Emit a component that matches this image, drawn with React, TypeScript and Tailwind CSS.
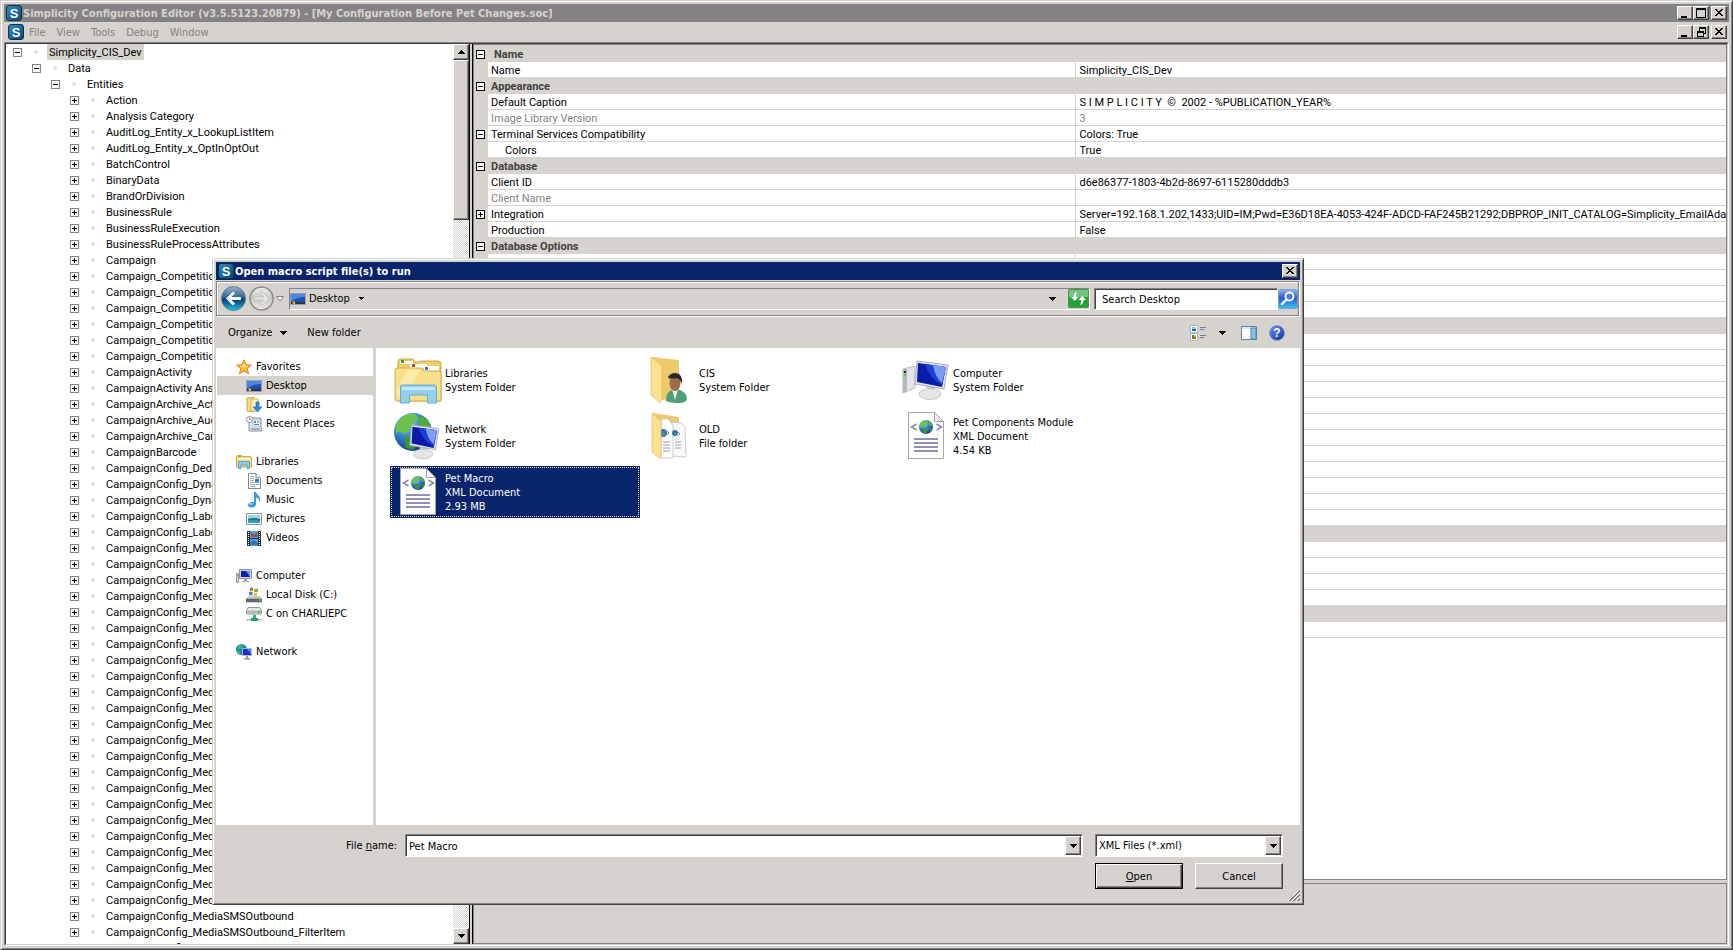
import { useId, useState } from "react";
import type { ReactNode } from "react";
import { clsx } from "clsx";

const RAISED =
  "border border-t-white border-l-white border-r-[#424142] border-b-[#424142] bg-[#d6d3ce] shadow-[inset_-1px_-1px_#848284]";
const SUNKEN =
  "border border-t-[#848284] border-l-[#848284] border-r-white border-b-white bg-white shadow-[inset_1px_1px_#424142]";
const UI_FONT = "font-['DejaVu_Sans_Condensed','DejaVu_Sans',sans-serif]";
const GRID_FONT = "font-['Roboto','Liberation_Sans',sans-serif]";

type TreeNode = { label: string; level: number; open?: boolean };

const entities = [
  "Action",
  "Analysis Category",
  "AuditLog_Entity_x_LookupListItem",
  "AuditLog_Entity_x_OptInOptOut",
  "BatchControl",
  "BinaryData",
  "BrandOrDivision",
  "BusinessRule",
  "BusinessRuleExecution",
  "BusinessRuleProcessAttributes",
  "Campaign",
  ...Array<string>(6).fill("Campaign_Competition"),
  "CampaignActivity",
  "CampaignActivity Answer",
  "CampaignArchive_Activity",
  "CampaignArchive_Audit",
  "CampaignArchive_Campaign",
  "CampaignBarcode",
  "CampaignConfig_Dedupe",
  "CampaignConfig_Dynamic",
  "CampaignConfig_Dynamic",
  "CampaignConfig_Label",
  "CampaignConfig_Label",
  ...Array<string>(22).fill("CampaignConfig_Media"),
  "CampaignConfig_MediaSMSInbound_Item",
  "CampaignConfig_MediaSMSOutbound",
  "CampaignConfig_MediaSMSOutbound_FilterItem",
  "CampaignConfig_ProductModel",
];

const tree: TreeNode[] = [
  { label: "Simplicity_CIS_Dev", level: 0, open: true },
  { label: "Data", level: 1, open: true },
  { label: "Entities", level: 2, open: true },
  ...entities.map((label) => ({ label, level: 3 })),
];

const INDENT = ["pl-[7px]", "pl-[26px]", "pl-[45px]", "pl-[64px]"];

type Property = {
  name?: string;
  value?: string;
  header?: boolean;
  toggle?: "plus" | "minus";
  muted?: boolean;
  nested?: boolean;
};

const blank = (count: number): Property[] => Array.from({ length: count }, () => ({}));

const properties: Property[] = [
  { name: "Name", header: true },
  { name: "Name", value: "Simplicity_CIS_Dev" },
  { name: "Appearance", header: true },
  { name: "Default Caption", value: "S I M P L I C I T Y  ©  2002 - %PUBLICATION_YEAR%" },
  { name: "Image Library Version", value: "3", muted: true },
  { name: "Terminal Services Compatibility", value: "Colors: True", toggle: "minus" },
  { name: "Colors", value: "True", nested: true },
  { name: "Database", header: true },
  { name: "Client ID", value: "d6e86377-1803-4b2d-8697-6115280dddb3" },
  { name: "Client Name", muted: true },
  {
    name: "Integration",
    value:
      "Server=192.168.1.202,1433;UID=IM;Pwd=E36D18EA-4053-424F-ADCD-FAF245B21292;DBPROP_INIT_CATALOG=Simplicity_EmailAdapter",
    toggle: "plus",
  },
  { name: "Production", value: "False" },
  { name: "Database Options", header: true },
  { name: "Auto Create", value: "False" },
  ...blank(3),
  { header: true },
  ...blank(12),
  { header: true },
  ...blank(4),
  { header: true },
  ...blank(1),
];

/* ---------- icons ---------- */

function AppIcon() {
  return (
    <span className="flex h-4 w-4 shrink-0 items-center justify-center rounded-[3px] border border-[#1c2c38] bg-linear-to-br from-[#2f8cc0] to-[#014a80] font-['Liberation_Sans',sans-serif] text-[13px] leading-none font-bold text-white">
      S
    </span>
  );
}

function Triangle({ className }: { className?: string }) {
  return (
    <svg width="7" height="4" viewBox="0 0 7 4" className={clsx("shrink-0", className)} shapeRendering="crispEdges">
      <path d="M0 0h7v1H6v1H5v1H4v1H3V3H2V2H1V1H0z" fill="#000" />
    </svg>
  );
}

function ToggleBox({ kind, stroke }: { kind: "plus" | "minus"; stroke: string }) {
  return (
    <svg width="9" height="9" viewBox="0 0 9 9" shapeRendering="crispEdges">
      <path d="M0 0h9v9H0z" fill={stroke} />
      <path d="M1 1h7v7H1z" fill="#fff" />
      <path d={kind === "plus" ? "M2 4h5v1H2zM4 2h1v5H4z" : "M2 4h5v1H2z"} fill="#000" />
    </svg>
  );
}

function Svg({ size = 16, children }: { size?: number; children: ReactNode }) {
  return (
    <svg width={size} height={size} viewBox={`0 0 ${size} ${size}`} className="shrink-0">
      {children}
    </svg>
  );
}

function StarIcon() {
  return (
    <Svg>
      <path
        d="M8 .8l2 4.9 5.3.4-4 3.5 1.3 5.3L8 12l-4.6 2.9 1.3-5.3-4-3.5 5.3-.4z"
        fill="#fdb834"
        stroke="#e2822a"
      />
      <path d="M8 3l1.200 3.400L12.500 7 8 8.500 4 7l3-.5z" fill="#ffe68c" />
    </Svg>
  );
}

function DesktopIcon() {
  return (
    <Svg>
      <path d="M0 2h16v12H0z" fill="#8fa3bd" />
      <path d="M1 3h14v8H1z" fill="#1c50b8" />
      <path d="M1 3h14v3Q8 6 1 10z" fill="#4f86e0" />
      <path d="M1 11h14v2H1z" fill="#30343c" />
      <path d="M2 10h2v2H2z" fill="#e8702a" />
      <path d="M4 10h1v2H4z" fill="#7ac943" />
      <path d="M3 12h2v1H3z" fill="#ffd23c" />
    </Svg>
  );
}

function DownloadsIcon() {
  return (
    <Svg>
      <path d="M1 1l7-.5V15L1 14z" fill="#f4dc8a" stroke="#c9a443" />
      <path d="M5 2h7v12H5z" fill="#fbeeb5" stroke="#d3b25a" />
      <path d="M10 5h3v5h3l-4.500 5L7 10h3z" fill="#2d8fdc" stroke="#1767ae" strokeWidth=".6" />
    </Svg>
  );
}

function RecentIcon() {
  return (
    <Svg>
      <path d="M4 2h11v9l1 4H3V2z" fill="#dfe3e8" stroke="#8e949c" />
      <path d="M7 4h7v6H7z" fill="#fff" stroke="#9aa6b5" strokeWidth=".6" />
      <path d="M8 5h2v2H8zM8 8h5v1H8z" fill="#3d8fd0" />
      <path d="M11 5h2v2h-2z" fill="#7fb7e6" />
      <path d="M5 12h9v2H5z" fill="#aab0b8" />
      <circle cx="3.500" cy="3.500" r="3" fill="#fafafa" stroke="#8e949c" />
      <path d="M3.500 1.500v2H5" stroke="#555" fill="none" strokeWidth=".7" />
    </Svg>
  );
}

function LibrariesIcon() {
  return (
    <Svg>
      <path d="M.5 2.500q0-1 1-1h4l1 1h8q1 0 1 1V13H.5z" fill="#f4dd85" stroke="#c8a849" />
      <path d="M2 2.500h3" stroke="#5aa84e" />
      <path d="M2 4h12v1.500H2z" fill="#fff8dc" />
      <path d="M2.500 14.500V8q0-.5.500-.5h10q.5 0 .5.500v6.500H11V11H5v3.500z" fill="#8ccbee" stroke="#4a9bcb" strokeWidth=".8" />
    </Svg>
  );
}

function DocumentsIcon() {
  return (
    <Svg>
      <path d="M2.500.5H10L14.500 5v10.500h-12z" fill="#fff" stroke="#7f8790" />
      <path d="M10 .5V5h4.500" fill="#e4e8ec" stroke="#7f8790" />
      <path d="M4 3.500h4M4 5.500h4M4 7.500h4M4 9.500h9M4 11.500h9M4 13.500h6" stroke="#9fb2c8" />
      <path d="M9 6h4v3H9z" fill="#2f7fd0" />
    </Svg>
  );
}

function MusicIcon() {
  return (
    <Svg>
      <path d="M8 0h2c.5 3 4 3 4 7 0 1-.5 2-1 2.500.2-2.500-1-3.500-3-4V12c0 2-2 3.500-4.500 3.500S2 14.500 2 13s2-3 4-3c.8 0 1.500.1 2 .4z" fill="#2f9be4" />
      <ellipse cx="5" cy="12" rx="2" ry="1" fill="#8fd0f7" />
    </Svg>
  );
}

function PicturesIcon() {
  return (
    <Svg>
      <path d="M.5 2.500h15v11H.5z" fill="#fff" stroke="#8c9196" />
      <path d="M2 4h12v4H2z" fill="#9ad4f2" />
      <path d="M2 8q4-2 12 0v4H2z" fill="#217a6c" />
      <path d="M2 9.500q6-1 12 .5v2H2z" fill="#2da0c8" />
    </Svg>
  );
}

function VideosIcon() {
  return (
    <Svg>
      <path d="M1 1h14v15H1z" fill="#2b2f36" />
      <path d="M4 1h8v7H4z" fill="#4da3dd" />
      <path d="M4 9h8v7H4z" fill="#4da3dd" />
      <path d="M5 2l3 3 3-3v5H5z" fill="#a34a3f" />
      <path d="M4 12l4-2 4 3v2H4z" fill="#2b74c4" />
      <path d="M2.500 2v13M13.500 2v13" stroke="#fff" strokeDasharray="1 1" />
    </Svg>
  );
}

function SmallComputerIcon() {
  return (
    <Svg>
      <path d="M.5 5.500h2v9h-2z" fill="#d5d7da" stroke="#999" />
      <path d="M1 7h1v1H1z" fill="#2fc42f" />
      <path d="M3.500 1.500h12v9h-12z" fill="#d2d4d8" stroke="#8f9296" />
      <path d="M5 3h9v6H5z" fill="#0b23b5" />
      <path d="M10 3h4v6z" fill="#6f93f5" />
      <path d="M8 11h3v2h2v1H6v-1h2z" fill="#a3a6aa" />
    </Svg>
  );
}

function DiskIcon() {
  return (
    <Svg>
      <path d="M2 9h12l2 3H0z" fill="#c6cbd0" />
      <path d="M0 12h16v3H0z" fill="#5d6972" stroke="#485058" strokeWidth=".5" />
      <path d="M13 12h2v2h-2z" fill="#45d845" />
      <path d="M4 1q2-1 3 0v3q-1-1-3 0z" fill="#e8562a" />
      <path d="M8 1.500q2 1 4 0v3q-2 1-4 0z" fill="#7ab83c" />
      <path d="M3 5q2-1 3.500 0v3.500q-2-1-3.500 0z" fill="#3b85d8" />
      <path d="M7.500 5.500q2 1 3.500 0v3q-2 1-3.500 0z" fill="#f5c32c" />
    </Svg>
  );
}

function NetDriveIcon() {
  return (
    <Svg>
      <path d="M2.500 1.500h11l2 2.500v3q0 1-1 1h-13q-1 0-1-1V4z" fill="#e4e6e8" stroke="#8f9498" />
      <path d="M1 4.500h14V7q0 .5-.5.500h-13Q1 7.500 1 7z" fill="#b4b8bd" />
      <path d="M12 5h2v2h-2z" fill="#30d030" />
      <path d="M7 9h3v4H7z" fill="#2ab07f" />
      <path d="M0 13h16v1.500H0z" fill="#a9b7b3" />
      <path d="M5 12h7v3H5z" fill="#1fa06e" />
    </Svg>
  );
}

function SmallNetworkIcon() {
  return (
    <Svg>
      <circle cx="5.500" cy="5.500" r="5.500" fill="#1d7fd6" />
      <path d="M2 2q3-2 5 0L5 5 2 6zM1 7l3 1v3Q1 10 1 7z" fill="#3bc93b" />
      <path d="M6.500 4.500h9v7h-9z" fill="#1630c0" stroke="#aab4cc" />
      <path d="M11 5h4v5z" fill="#5a80ee" />
      <path d="M10 12h2v2h2v1.500H8V14h2z" fill="#8e95a2" />
    </Svg>
  );
}

function LargeLibraries() {
  return (
    <Svg size={48}>
      <path d="M4 6q0-3 3-3h11q2 0 3 3h3q1-1 3-1h17q3 0 3 3v37H4z" fill="#efcd68" stroke="#cfa63f" />
      <path d="M6 5h13v3H6z" fill="#fff" />
      <path d="M7 4h3v3H7z" fill="#3f9e3f" />
      <path d="M16 8h17v4H16z" fill="#fff" />
      <path d="M18 8h3v3h-3z" fill="#dc3d22" />
      <path d="M30 10h15v5H30z" fill="#fff" />
      <path d="M31 11h3v3h-3z" fill="#2c7fcb" />
      <path d="M1 14q0-2 2-2h24l3 3h15q2 0 2 2v26q0 2-2 2H3q-2 0-2-2z" fill="#f8e08a" stroke="#d3ad4b" />
      <path d="M2 38L13 14h14L7 44z" fill="#fdf2c0" opacity=".6" />
      <path d="M6.500 47V31q0-2 2-2h31q3 0 3 2v16h-9v-8h-18v8z" fill="#94d0ee" stroke="#5baed6" />
      <path d="M8 31h33v3H8z" fill="#c5e8f8" />
    </Svg>
  );
}

function LargeUserFolder() {
  return (
    <Svg size={48}>
      <path d="M4 1l27 3v38l-17 2z" fill="#ecca6c" />
      <path d="M3 1l11 9v32l-2 5L3 39z" fill="#fae28f" stroke="#e2c062" strokeWidth=".7" />
      <path d="M18 45q0-9 6-11h8q7 3 7 9-1 4-8 4-8 0-13-2z" fill="#4f9d79" />
      <path d="M24 33h6l-3 11z" fill="#f0f5f2" />
      <ellipse cx="27" cy="27" rx="5.500" ry="8" fill="#9c6e4c" />
      <path d="M20 22q1-5 8-5 7 1 6 11-2-5-5-6-5 1-9 0z" fill="#2b2621" />
    </Svg>
  );
}

function Monitor({ x, y }: { x: number; y: number }) {
  return (
    <g transform={`translate(${x} ${y})`}>
      <path d="M12 24l9 2-1 6h-7z" fill="#c9cccf" />
      <ellipse cx="16" cy="33" rx="11" ry="5.500" fill="#e3e5e7" stroke="#b5b8bb" strokeWidth=".7" />
      <path d="M3 0l31 4-4 24-29-5z" fill="#dfe3ea" stroke="#a9adb4" />
      <path d="M4 2l28 4-4 20-25-5z" fill="#0a1ba8" />
      <path d="M11 3l21 3-4 18q-12-5-17-21z" fill="#1e3fd2" />
      <path d="M19 4l13 2-4 16q-7-6-9-18z" fill="#7f9df3" />
    </g>
  );
}

function LargeComputer() {
  return (
    <Svg size={48}>
      <path d="M1 13l12-3v22L1 37z" fill="#e2e4e7" stroke="#9fa2a6" strokeWidth=".7" />
      <path d="M1 13h4v23H1z" fill="#b3b6ba" />
      <path d="M2 15h2v2H2z" fill="#222" />
      <path d="M2 18h2v2H2z" fill="#3fdd33" />
      <Monitor x={12} y={5} />
    </Svg>
  );
}

function Globe({ cx, cy, r }: { cx: number; cy: number; r: number }) {
  const id = useId();
  return (
    <g transform={`translate(${cx} ${cy}) scale(${r / 20})`}>
      <radialGradient id={id} cx=".35" cy=".25" r=".8">
        <stop offset="0" stopColor="#9fd6f7" />
        <stop offset=".5" stopColor="#2d7fd0" />
        <stop offset="1" stopColor="#123c85" />
      </radialGradient>
      <circle r="20" fill={`url(#${id})`} />
      <path d="M-16-11Q-8-21 2-19L6-14-1-8-3-2-10 2-14-1-18 2Q-19-6-16-11z" fill="#6ec14b" />
      <path d="M8-17Q16-14 19-5L13-2 8-7 5-12z" fill="#53ab3c" />
      <path d="M-9 5L0 4 6 9 1 18Q-5 19-8 16z" fill="#3e9434" />
      <path d="M11 4l6-1Q16 12 11 15z" fill="#3e9434" />
    </g>
  );
}

function LargeNetwork() {
  return (
    <Svg size={48}>
      <Globe cx={19} cy={20} r={19} />
      <g transform="translate(15 13) scale(.88)">
        <Monitor x={0} y={0} />
      </g>
    </Svg>
  );
}

function LargeFolder() {
  return (
    <Svg size={48}>
      <path d="M5 1l26 4v36l-17 3z" fill="#ecca6c" />
      <path d="M24 10l9 1 4 4 1 30-14-1z" fill="#fafafa" stroke="#c9cbce" />
      <path d="M13 7h7l5 6v33H13z" fill="#fdfdfd" stroke="#c9cbce" />
      <circle cx="15" cy="21" r="4" fill="#3274b8" />
      <circle cx="27" cy="21" r="3" fill="#3274b8" />
      <path d="M14 19l3 3-2 3zM26 19l2 2-1 3z" fill="#4eaa4a" />
      <path d="M30 20l2 2-2 2M19 19l2 2-2 2" stroke="#8b88b0" fill="none" />
      <path d="M15 30h7M15 33h7M15 36h7M15 39h7M27 30h6M27 33h6M27 36h6" stroke="#9c9abb" />
      <path d="M4 1l9 9v32l-1 5-8-7z" fill="#fae28f" stroke="#e2c062" strokeWidth=".7" />
    </Svg>
  );
}

function LargeXml() {
  return (
    <Svg size={48}>
      <path d="M6.500.5h26l9 9v37h-35z" fill="#fff" stroke="#a3a3a8" />
      <path d="M32.500.5v9h9z" fill="#f2f2f4" stroke="#a3a3a8" />
      <path d="M14.500 12l-5 3 5 3M34.500 12l5 3-5 3" fill="none" stroke="#8c8aac" strokeWidth="1.600" />
      <Globe cx={24} cy={15} r={7} />
      <path d="M12 27h24M12 31h24M12 35h24M12 39h24" stroke="#918fb3" strokeWidth="2" />
    </Svg>
  );
}

function BackIcon() {
  return (
    <svg width="25" height="25" viewBox="0 0 25 25">
      <defs>
        <linearGradient id="backFill" x2="0" y2="1">
          <stop offset="0" stopColor="#9db8cc" />
          <stop offset=".45" stopColor="#2a6390" />
          <stop offset=".55" stopColor="#053f6e" />
          <stop offset="1" stopColor="#22c0ee" />
        </linearGradient>
      </defs>
      <circle cx="12.500" cy="12.500" r="12" fill="url(#backFill)" stroke="#60788c" />
      <path d="M5 12.500l7-7 2 2-3.500 3.500H20v3h-9.500l3.500 3.500-2 2z" fill="#fff" />
    </svg>
  );
}

function ForwardIcon() {
  return (
    <svg width="25" height="25" viewBox="0 0 25 25">
      <defs>
        <linearGradient id="forwardFill" x2="0" y2="1">
          <stop offset="0" stopColor="#efeeec" />
          <stop offset=".5" stopColor="#c9c7c3" />
          <stop offset="1" stopColor="#eceae7" />
        </linearGradient>
      </defs>
      <circle cx="12.500" cy="12.500" r="11.500" fill="url(#forwardFill)" stroke="#8d8c8a" strokeWidth="1.500" />
      <path d="M20 12.500l-7-7-2 2 3.500 3.500H5v3h9.500L11 17.500l2 2z" fill="#e8e6e3" stroke="#b9b7b3" strokeWidth=".7" />
    </svg>
  );
}

function RefreshIcon() {
  return (
    <svg width="21" height="19" viewBox="0 0 21 19">
      <rect x=".5" y=".5" width="20" height="18" rx="1" fill="#25a13a" stroke="#4d8f58" />
      <path d="M1 1h19v7H1z" fill="#6fc67c" />
      <path d="M9 3Q5 4 5.500 8H3l3.800 4L10.500 8H8q-.3-2.500 1-5z" fill="#fff" />
      <path d="M12 16q4-1 3.500-5H18l-3.800-4-3.700 4H13q.3 2.500-1 5z" fill="#fff" />
    </svg>
  );
}

function SearchIcon() {
  return (
    <svg width="20" height="20" viewBox="0 0 20 20">
      <defs>
        <linearGradient id="searchFill" x2="0" y2="1">
          <stop offset="0" stopColor="#9bb3ee" />
          <stop offset=".45" stopColor="#2b5ad6" />
          <stop offset="1" stopColor="#35c5f2" />
        </linearGradient>
      </defs>
      <rect x=".5" y=".5" width="19" height="19" rx="1" fill="url(#searchFill)" stroke="#7f9fca" />
      <circle cx="11.500" cy="7.500" r="4" fill="#4a7de0" stroke="#fff" strokeWidth="1.800" />
      <path d="M8.500 10.500L4 15" stroke="#fff" strokeWidth="2.400" strokeLinecap="round" />
    </svg>
  );
}

function ViewsIcon() {
  return (
    <Svg>
      <path d="M.5.5h7v7h-7zM.5 8.500h7v7h-7z" fill="#fff" stroke="#a9b7cc" />
      <path d="M2 2h4v2H2z" fill="#8ecdf0" />
      <path d="M2 4h4v2H2z" fill="#1e6e7e" />
      <path d="M2 10h2v2H2zM4 12h2v2H4z" fill="#3c9a2c" />
      <path d="M4 10h2v2H4z" fill="#f0b62c" />
      <path d="M2 12h2v2H2z" fill="#d94a28" />
      <path d="M10 2.500h6M10 4.500h4M10 10.500h6M10 12.500h4" stroke="#6a7f9b" />
    </Svg>
  );
}

function PreviewPaneIcon() {
  return (
    <Svg>
      <path d="M.5 1.500h15v13H.5z" fill="#fff" stroke="#5e7fa6" />
      <path d="M1 2h14v2H1z" fill="#dfe8f2" />
      <path d="M10 3h5v11h-5z" fill="#7cc8e8" stroke="#5e7fa6" />
    </Svg>
  );
}

function HelpIcon() {
  return (
    <span className="flex h-4 w-4 items-center justify-center rounded-full border border-[#8898c0] bg-linear-to-br from-[#6a8cf0] to-[#0f2fa8] font-['Liberation_Sans',sans-serif] text-[12px] leading-none font-bold text-white">
      ?
    </span>
  );
}

/* ---------- window chrome ---------- */

const CAPTION_PATHS = {
  minimize: "M3 9h6v2H3z",
  maximize: "M2 1h10v10H2zM3 3v7h8V3z",
  restore: "M5 1h7v7h-2v3H3V5h2zM6 3v2h4v2h1V3zM4 7v3h5V7z",
  close: "M3 2h2v1h1v1h2V3h1V2h2v1h-1v1H9v1H8v1h1v1h1v1h1v1H9V8H8V7H6v1H5v1H3V8h1V7h1V6h1V5H5V4H4V3H3z",
};

function CaptionButton({ kind, label }: { kind: keyof typeof CAPTION_PATHS; label: string }) {
  return (
    <button
      type="button"
      aria-label={label}
      className={clsx("flex h-[14px] w-4 shrink-0 items-start", RAISED, kind === "close" && "ml-[2px]")}
    >
      <svg width="14" height="12" viewBox="0 0 14 12" shapeRendering="crispEdges">
        <path d={CAPTION_PATHS[kind]} fillRule="evenodd" fill="#000" />
      </svg>
    </button>
  );
}

function ScrollBar() {
  return (
    <div className="flex w-4 shrink-0 flex-col bg-[repeating-conic-gradient(#fff_0_25%,#d6d3ce_0_50%)] bg-[length:2px_2px]">
      <button type="button" aria-label="Scroll up" className={clsx("flex h-4 items-center justify-center", RAISED)}>
        <Triangle className="rotate-180" />
      </button>
      <div className={clsx("h-[160px]", RAISED)} />
      <button
        type="button"
        aria-label="Scroll down"
        className={clsx("mt-auto flex h-4 items-center justify-center", RAISED)}
      >
        <Triangle />
      </button>
    </div>
  );
}

function EntityTree() {
  const [selected, setSelected] = useState(0);
  return (
    <ul className={clsx("min-w-0 flex-1 overflow-hidden bg-white text-[11px]", GRID_FONT)}>
      {tree.map((node, i) => (
        <li key={i} className={clsx("flex h-4 items-center whitespace-nowrap", INDENT[node.level])}>
          <button type="button" aria-label={`${node.open ? "Collapse" : "Expand"} ${node.label}`}>
            <ToggleBox kind={node.open ? "minus" : "plus"} stroke="#848284" />
          </button>
          <span className="mr-[9px] ml-3 h-1 w-1 rounded-full bg-[#e3dde3]" />
          <button
            type="button"
            onClick={() => setSelected(i)}
            className={clsx("h-4 px-[2px] pt-[2px] leading-[14px]", selected === i && "bg-[#d6d3ce]")}
          >
            {node.label}
          </button>
        </li>
      ))}
    </ul>
  );
}

function PropertyGrid() {
  return (
    <div className="min-h-0 flex-1 overflow-hidden border border-[#848284] bg-white">
      <table
        className={clsx(
          "w-full table-fixed border-separate border-spacing-0 border-t border-[#d6d3ce] text-[11px] leading-[13px] whitespace-pre",
          GRID_FONT,
        )}
      >
        <colgroup>
          <col className="w-[14px]" />
          <col className="w-[47%]" />
          <col />
        </colgroup>
        <tbody>
          {properties.map((row, i) => {
            const toggle = row.toggle ?? (row.header && row.name ? "minus" : undefined);
            return (
              <tr key={i} className={clsx("h-4", row.muted ? "text-[#848284]" : "text-black")}>
                <td className="bg-[#d6d3ce] p-0">
                  {toggle && (
                    <button type="button" aria-label={`Toggle ${row.name}`} className="ml-[2px] block">
                      <ToggleBox kind={toggle} stroke="#000" />
                    </button>
                  )}
                </td>
                {row.header ? (
                  <th
                    colSpan={2}
                    className={clsx("bg-[#d6d3ce] p-0 text-left font-bold text-[#424142]", i === 0 ? "pl-[6px]" : "pl-[3px]")}
                  >
                    {row.name}
                  </th>
                ) : (
                  <>
                    <td
                      className={clsx(
                        "overflow-hidden border-r border-b border-[#d6d3ce] p-0 pt-[2px]",
                        row.nested ? "pl-[17px]" : "pl-[3px]",
                      )}
                    >
                      {row.name}
                    </td>
                    <td className="overflow-hidden border-b border-[#d6d3ce] p-0 pt-[2px] pl-[3px]">{row.value}</td>
                  </>
                )}
              </tr>
            );
          })}
        </tbody>
      </table>
    </div>
  );
}

/* ---------- open dialog ---------- */

type Place = { label: string; icon: ReactNode; child?: boolean };

const placeGroups: Place[][] = [
  [
    { label: "Favorites", icon: <StarIcon /> },
    { label: "Desktop", icon: <DesktopIcon />, child: true },
    { label: "Downloads", icon: <DownloadsIcon />, child: true },
    { label: "Recent Places", icon: <RecentIcon />, child: true },
  ],
  [
    { label: "Libraries", icon: <LibrariesIcon /> },
    { label: "Documents", icon: <DocumentsIcon />, child: true },
    { label: "Music", icon: <MusicIcon />, child: true },
    { label: "Pictures", icon: <PicturesIcon />, child: true },
    { label: "Videos", icon: <VideosIcon />, child: true },
  ],
  [
    { label: "Computer", icon: <SmallComputerIcon /> },
    { label: "Local Disk (C:)", icon: <DiskIcon />, child: true },
    { label: "C on CHARLIEPC", icon: <NetDriveIcon />, child: true },
  ],
  [{ label: "Network", icon: <SmallNetworkIcon /> }],
];

const files = [
  { name: "Libraries", kind: "System Folder", icon: <LargeLibraries /> },
  { name: "CIS", kind: "System Folder", icon: <LargeUserFolder /> },
  { name: "Computer", kind: "System Folder", icon: <LargeComputer /> },
  { name: "Network", kind: "System Folder", icon: <LargeNetwork /> },
  { name: "OLD", kind: "File folder", icon: <LargeFolder /> },
  { name: "Pet Components Module", kind: "XML Document", size: "4.54 KB", icon: <LargeXml /> },
  { name: "Pet Macro", kind: "XML Document", size: "2.93 MB", icon: <LargeXml /> },
];

function AddressBar() {
  return (
    <div className="mt-px mr-px flex h-[35px] shrink-0 items-center border border-[#848284] pl-1 shadow-[inset_1px_1px_#fff,1px_1px_#fff]">
      <button type="button" aria-label="Back">
        <BackIcon />
      </button>
      <button type="button" aria-label="Forward" className="ml-[3px]">
        <ForwardIcon />
      </button>
      <button type="button" aria-label="Recent locations" className="ml-[2px]">
        <svg width="8" height="6" viewBox="0 0 8 6">
          <path d="M.5.5h7L4 5z" fill="#fff" stroke="#848284" />
        </svg>
      </button>
      <div className="ml-[5px] flex h-[22px] flex-1 items-center border border-t-[#848284] border-l-[#848284] border-r-white border-b-white">
        <DesktopIcon />
        <button type="button" className="ml-[3px] flex items-center gap-[9px]">
          Desktop
          <svg width="5" height="3" viewBox="0 0 5 3" shapeRendering="crispEdges">
            <path d="M0 0h5v1H4v1H3v1H2V2H1V1H0z" />
          </svg>
        </button>
        <button type="button" aria-label="Previous locations" className="mr-3 ml-auto">
          <Triangle />
        </button>
        <button type="button" aria-label="Refresh">
          <RefreshIcon />
        </button>
      </div>
      <input
        aria-label="Search Desktop"
        placeholder="Search Desktop"
        className={clsx("ml-1 h-[22px] w-[184px] px-[7px] pt-px outline-none placeholder:text-black", SUNKEN)}
      />
      <button type="button" aria-label="Search">
        <SearchIcon />
      </button>
    </div>
  );
}

function Places() {
  return (
    <nav className="flex w-[157px] shrink-0 flex-col gap-[19px] overflow-hidden bg-white pt-[9px] pl-px">
      {placeGroups.map((group) => (
        <ul key={group[0].label}>
          {group.map((place) => (
            <li key={place.label}>
              <a
                href="#"
                className={clsx(
                  "flex h-[19px] items-center gap-1 pt-px whitespace-nowrap",
                  place.child ? "pl-[29px]" : "pl-[19px]",
                  place.label === "Desktop" && "bg-[#d6d3ce]",
                )}
              >
                {place.icon}
                {place.label}
              </a>
            </li>
          ))}
        </ul>
      ))}
    </nav>
  );
}

function OpenDialog() {
  const [current, setCurrent] = useState("Pet Macro");
  const [fileName, setFileName] = useState("Pet Macro");

  return (
    <section
      role="dialog"
      aria-label="Open macro script file(s) to run"
      className={clsx(
        "absolute top-[257px] right-[428px] bottom-[44px] left-[211px] flex flex-col border border-t-[#d6d3ce] border-l-[#d6d3ce] border-r-[#424142] border-b-[#424142] bg-[#d6d3ce] p-[3px] text-[11px] leading-[14px] text-black shadow-[inset_1px_1px_#fff,inset_-1px_-1px_#848284]",
        UI_FONT,
      )}
    >
      <header className="flex h-[18px] shrink-0 items-center bg-[#08246b] pr-[2px] pl-[2px] font-bold text-white">
        <AppIcon />
        <h2 className="ml-px flex-1 pt-[2px]">Open macro script file(s) to run</h2>
        <CaptionButton kind="close" label="Close dialog" />
      </header>

      <AddressBar />

      <div className="flex h-8 shrink-0 items-center pt-px pr-[15px] pl-3">
        <button type="button" className="flex items-center gap-2">
          Organize
          <Triangle />
        </button>
        <button type="button" className="ml-5">
          New folder
        </button>
        <button type="button" aria-label="Change view" className="ml-auto">
          <ViewsIcon />
        </button>
        <button type="button" aria-label="More views" className="ml-[13px]">
          <Triangle />
        </button>
        <button type="button" aria-label="Preview pane" className="ml-[15px]">
          <PreviewPaneIcon />
        </button>
        <button type="button" aria-label="Help" className="ml-3">
          <HelpIcon />
        </button>
      </div>

      <div className="flex min-h-0 flex-1 gap-[3px]">
        <Places />
        <ul className="flex min-w-0 flex-1 flex-wrap content-start gap-1 bg-white pt-[6px] pr-[150px] pl-[14px]">
          {files.map((file) => {
            const active = file.name === current;
            return (
              <li key={file.name}>
                <button
                  type="button"
                  onClick={() => setCurrent(file.name)}
                  className={clsx(
                    "flex h-[52px] w-[250px] items-center gap-[3px] pl-1 text-left",
                    active && "bg-[#08246b] text-white outline-1 -outline-offset-2 outline-dotted outline-[#f7db94]",
                  )}
                >
                  {file.icon}
                  <span className="pt-[2px]">
                    <span className="block">{file.name}</span>
                    <span className="block">{file.kind}</span>
                    {file.size && <span className="block">{file.size}</span>}
                  </span>
                </button>
              </li>
            );
          })}
        </ul>
      </div>

      <form
        className="relative grid h-[76px] shrink-0 grid-cols-[1fr_88px_88px] content-start gap-x-3 gap-y-[6px] pt-[9px] pr-[17px]"
        onSubmit={(e) => e.preventDefault()}
      >
        <div className="flex items-center pl-[130px]">
          <label htmlFor="fileName" className="w-[59px] shrink-0 pt-px">
            File <u>n</u>ame:
          </label>
          <div className={clsx("flex h-[23px] flex-1 p-px", SUNKEN)}>
            <input
              id="fileName"
              value={fileName}
              onChange={(e) => setFileName(e.target.value)}
              className="min-w-0 flex-1 bg-transparent pt-[2px] pl-[2px] outline-none"
            />
            <button
              type="button"
              aria-label="Show file names"
              className={clsx("flex w-4 items-center justify-center", RAISED)}
            >
              <Triangle />
            </button>
          </div>
        </div>
        <div className="relative col-span-2">
          <select
            aria-label="Files of type"
            className={clsx("h-[23px] w-full appearance-none rounded-none pt-px pl-[3px]", SUNKEN)}
          >
            <option>XML Files (*.xml)</option>
          </select>
          <span
            className={clsx(
              "pointer-events-none absolute top-[2px] right-[2px] bottom-[2px] flex w-4 items-center justify-center",
              RAISED,
            )}
          >
            <Triangle />
          </span>
        </div>
        <button
          type="submit"
          className="col-start-2 h-[26px] border border-black bg-[#d6d3ce] pt-px shadow-[inset_1px_1px_#fff,inset_-1px_-1px_#424142,inset_-2px_-2px_#848284]"
        >
          <u>O</u>pen
        </button>
        <button type="button" className={clsx("pt-px", RAISED)}>
          Cancel
        </button>
        <svg width="12" height="12" viewBox="0 0 12 12" className="absolute right-0 bottom-0">
          <path d="M0 12L12 0M4 12L12 4M8 12L12 8" stroke="#fff" />
          <path d="M1 12L12 1M2 12L12 2M5 12L12 5M6 12L12 6M9 12L12 9M10 12L12 10" stroke="#848284" />
        </svg>
      </form>
    </section>
  );
}

export default function App() {
  return (
    <div
      className={clsx(
        "relative flex h-screen flex-col overflow-hidden border border-t-[#d6d3ce] border-l-[#d6d3ce] border-r-[#424142] border-b-[#424142] bg-[#d6d3ce] p-[3px] text-[11px] leading-[14px] shadow-[inset_1px_1px_#fff,inset_-1px_-1px_#848284]",
        UI_FONT,
      )}
    >
      <header className="flex h-[18px] shrink-0 items-center bg-[#848284] px-[2px] font-bold text-[#d6d3ce]">
        <AppIcon />
        <h1 className="ml-px flex-1 pt-[2px] whitespace-nowrap">
          Simplicity Configuration Editor (v3.5.5123.20879) - [My Configuration Before Pet Changes.soc]
        </h1>
        <CaptionButton kind="minimize" label="Minimize" />
        <CaptionButton kind="maximize" label="Maximize" />
        <CaptionButton kind="close" label="Close" />
      </header>

      <div className="flex h-5 shrink-0 items-center pr-[2px] pl-1 text-[#848284]">
        <AppIcon />
        <nav className="ml-[5px] flex flex-1 gap-[11px] pt-[2px]">
          {["File", "View", "Tools", "Debug", "Window"].map((item) => (
            <button key={item} type="button">
              {item}
            </button>
          ))}
        </nav>
        <CaptionButton kind="minimize" label="Minimize document" />
        <CaptionButton kind="restore" label="Restore document" />
        <CaptionButton kind="close" label="Close document" />
      </div>

      <main className="flex min-h-0 flex-1 border border-t-[#848284] border-l-[#848284] border-r-white border-b-white">
        <div className="flex min-h-0 min-w-0 flex-1 border border-t-[#424142] border-l-[#424142] border-r-[#d6d3ce] border-b-[#d6d3ce]">
          <div className="flex w-[463px] shrink-0">
            <EntityTree />
            <ScrollBar />
          </div>
          <div className="w-1 shrink-0 border-x border-black bg-[#d6d3ce]" />
          <div className="flex min-w-0 flex-1 flex-col gap-[3px]">
            <PropertyGrid />
            <div className="h-[61px] shrink-0 border border-[#848284]" />
          </div>
        </div>
      </main>

      <OpenDialog />
    </div>
  );
}
